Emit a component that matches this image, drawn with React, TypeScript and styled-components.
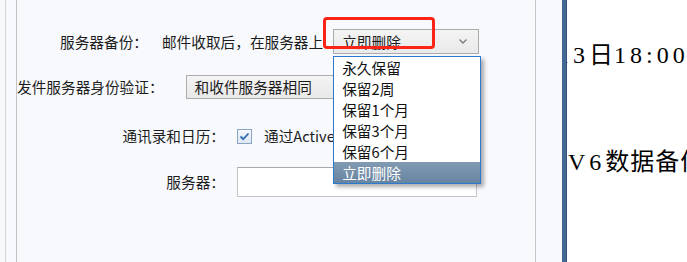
import React from 'react';
import styled, { createGlobalStyle } from 'styled-components';

const GlobalStyle = createGlobalStyle`
  html, body {
    margin: 0;
    padding: 0;
  }
  body {
    font-family: "Noto Sans CJK SC", "Noto Sans", sans-serif;
    font-size: 11pt;
    color: #1c1c1c;
  }
`;

const Page = styled.div`
  display: flex;
  width: 687px;
  height: 262px;
  overflow: hidden;
  background: #f7f9fd;
`;

const Gutter = styled.div<{ $w: number; $line: string }>`
  flex: none;
  width: ${(p) => p.$w}px;
  border-right: 1px solid ${(p) => p.$line};
`;

const Panel = styled.div`
  flex: none;
  width: 518px;
  border-right: 1px solid #c7c7c7;
  display: flex;
  flex-direction: column;
  padding-top: 29px;
`;

const Spacer = styled.div`
  flex: none;
  width: 26px;
`;

const BlueBar = styled.div`
  flex: none;
  width: 4px;
  background: #436894;
  border-right: 1px solid #33547c;
`;

const Doc = styled.div`
  flex: 1;
  background: #fff;
  overflow: hidden;
  padding-top: 40px;
  font-family: "Liberation Serif", "Noto Sans CJK SC", serif;
  font-size: 24px;
  letter-spacing: 1px;
  color: #000;
`;

const DocLine = styled.div<{ $mt?: number; $shift?: number }>`
  height: 30px;
  line-height: 30px;
  white-space: nowrap;
  margin-top: ${(p) => p.$mt ?? 0}px;
  margin-left: ${(p) => p.$shift ?? 0}px;
`;

// latin and digits in the document sit wider apart than the CJK text
const Num = styled.span`
  letter-spacing: 4px;
`;

const Row = styled.div<{ $h: number; $mt?: number; $indent?: number; $gap: number }>`
  display: flex;
  align-items: center;
  height: ${(p) => p.$h}px;
  margin-top: ${(p) => p.$mt ?? 0}px;
  padding-left: ${(p) => p.$indent ?? 0}px;
  gap: ${(p) => p.$gap}px;
  white-space: nowrap;
`;

const Label = styled.span<{ $w?: number }>`
  flex: none;
  width: ${(p) => (p.$w ? `${p.$w}px` : 'auto')};
  text-align: ${(p) => (p.$w ? 'right' : 'left')};
  line-height: 20px;
`;

const Value = styled.span<{ $max?: number }>`
  line-height: 20px;
  overflow: hidden;
  max-width: ${(p) => (p.$max ? `${p.$max}px` : 'none')};
`;

const SelectWrap = styled.div`
  position: relative;
  flex: none;
  margin-left: -4px;
`;

const Select = styled.div<{ $w: number; $h: number }>`
  box-sizing: border-box;
  display: flex;
  align-items: center;
  justify-content: space-between;
  width: ${(p) => p.$w}px;
  height: ${(p) => p.$h}px;
  padding: 0 11px 0 8px;
  border: 1px solid #acacac;
  background: linear-gradient(#f4f4f4, #e9e9e9);
  line-height: 20px;
`;

const Chevron = () => (
  <svg width="8" height="5" viewBox="0 0 8 5">
    <path d="M0.5 0.5 L4 4 L7.5 0.5" fill="none" stroke="#7a7a7a" strokeWidth="1.3" />
  </svg>
);

const Highlight = styled.div`
  position: absolute;
  left: -10px;
  top: -12px;
  width: 112px;
  height: 32px;
  box-sizing: border-box;
  border: 3px solid #fb2416;
  border-radius: 4px;
  pointer-events: none;
  z-index: 3;
`;

const Menu = styled.ul`
  position: absolute;
  left: 0;
  top: 27px;
  width: 148px;
  box-sizing: border-box;
  margin: 0;
  padding: 0;
  list-style: none;
  background: #fff;
  border: 1px solid #2a7bd0;
  box-shadow: 3px 3px 4px rgba(0, 0, 0, 0.32);
  z-index: 2;
`;

const MenuItem = styled.li<{ $active?: boolean }>`
  height: 21px;
  line-height: 21px;
  padding-left: 8px;
  color: ${(p) => (p.$active ? '#fff' : '#111')};
  background: ${(p) => (p.$active ? 'linear-gradient(#829bb3, #6784a1)' : 'transparent')};
`;

const Check = styled.span`
  flex: none;
  box-sizing: border-box;
  width: 15px;
  height: 15px;
  border: 1px solid #8ca4c4;
  background: linear-gradient(#f4f7fb, #dfe7f1);
  display: flex;
  align-items: center;
  justify-content: center;
`;

const Input = styled.div`
  flex: none;
  box-sizing: border-box;
  width: 240px;
  height: 30px;
  background: #fff;
  border: 1px solid #c4c4c4;
  border-top-color: #a9a9a9;
`;

const options = ['永久保留', '保留2周', '保留1个月', '保留3个月', '保留6个月', '立即删除'];

export default function App() {
  return (
    <>
      <GlobalStyle />
      <Page>
        <Gutter $w={5} $line="#d6d6d6" />
        <Gutter $w={10} $line="#c3c3c3" />
        <Panel>
          <Row $h={25} $indent={43} $gap={14}>
            <Label>服务器备份：</Label>
            <Value>邮件收取后，在服务器上</Value>
            <SelectWrap>
              <Select $w={146} $h={25}>
                <span>立即删除</span>
                <Chevron />
              </Select>
              <Highlight />
              <Menu>
                {options.map((o) => (
                  <MenuItem key={o} $active={o === '立即删除'}>
                    {o}
                  </MenuItem>
                ))}
              </Menu>
            </SelectWrap>
          </Row>
          <Row $h={24} $mt={21} $gap={22}>
            <Label>发件服务器身份验证：</Label>
            <Select $w={293} $h={24}>
              <span>和收件服务器相同</span>
              <Chevron />
            </Select>
          </Row>
          <Row $h={20} $mt={27} $gap={12}>
            <Label $w={208}>通讯录和日历：</Label>
            <Check>
              <svg width="11" height="9" viewBox="0 0 11 9">
                <path d="M1.5 4.5 L4.2 7.2 L9.5 1.5" fill="none" stroke="#2f6db5" strokeWidth="1.8" />
              </svg>
            </Check>
            <Value $max={69}>通过ActiveSync同步到服务器</Value>
          </Row>
          <Row $h={30} $mt={21} $gap={12}>
            <Label $w={208}>服务器：</Label>
            <Input />
          </Row>
        </Panel>
        <Spacer />
        <BlueBar />
        <Doc>
          <DocLine $shift={-10}>
            <Num>13</Num>日<Num>18:00</Num>。
          </DocLine>
          <DocLine $mt={77} $shift={1}>
            <Num>V6</Num>数据备份
          </DocLine>
        </Doc>
      </Page>
    </>
  );
}
